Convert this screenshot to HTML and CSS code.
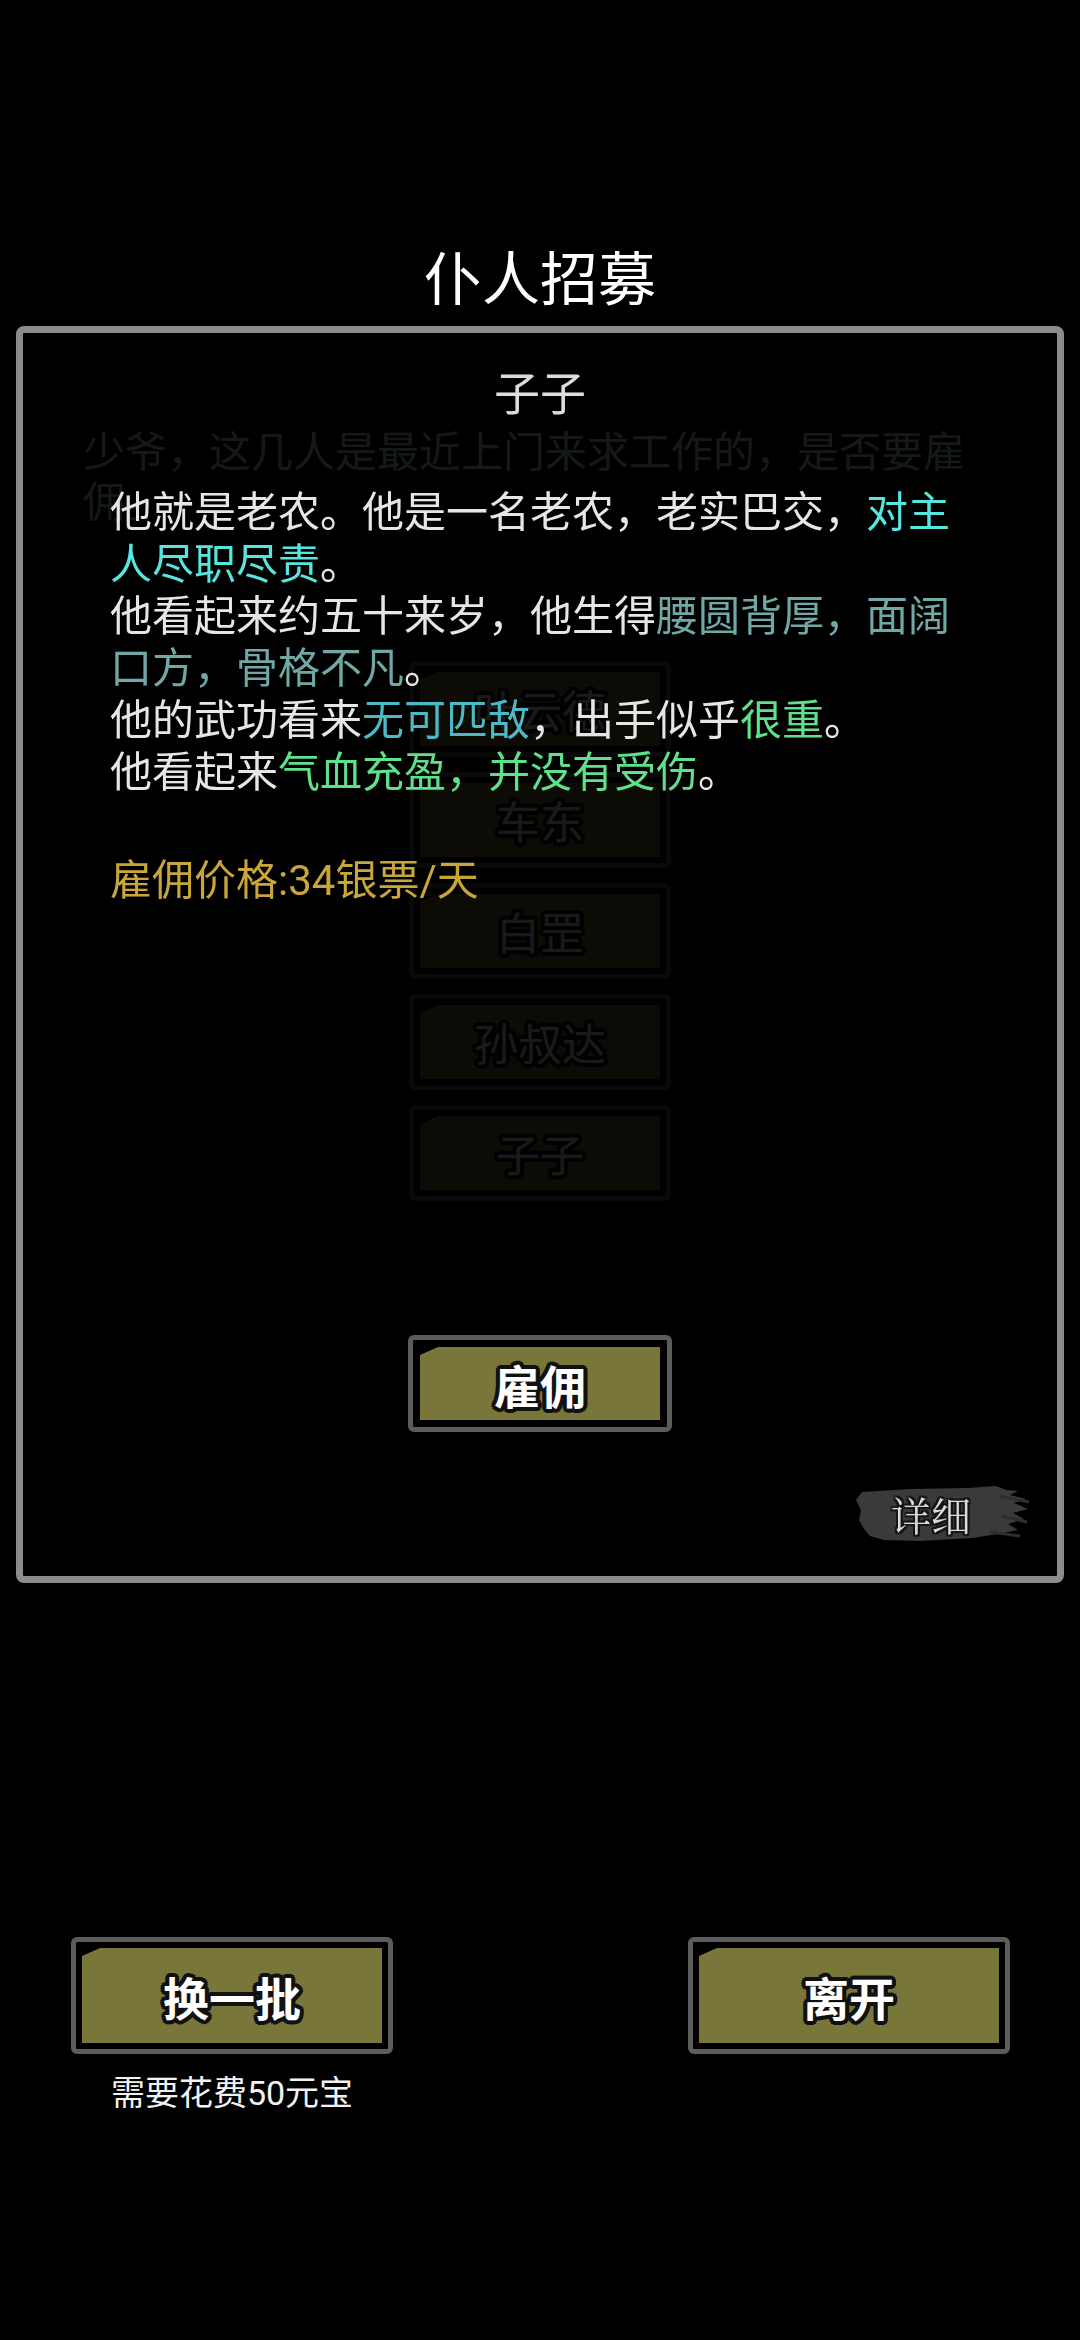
FILE: index.html
```html
<!DOCTYPE html>
<html lang="zh-CN">
<head>
<meta charset="utf-8">
<title>仆人招募</title>
<link rel="stylesheet" href="styles.css">
</head>
<body>
<div class="page">
  <h1 class="title">仆人招募</h1>

  <section class="panel">
    <div class="base-layer">
      <p class="intro">少爷，这几人是最近上门来求工作的，是否要雇佣。</p>
      <div class="roster">
        <div class="btn btn-roster"><div class="btn-fill"><span class="btn-label">叶云德</span></div></div>
        <div class="btn btn-roster"><div class="btn-fill"><span class="btn-label">车东</span></div></div>
        <div class="btn btn-roster"><div class="btn-fill"><span class="btn-label">白罡</span></div></div>
        <div class="btn btn-roster"><div class="btn-fill"><span class="btn-label">孙叔达</span></div></div>
        <div class="btn btn-roster"><div class="btn-fill"><span class="btn-label">子子</span></div></div>
      </div>
    </div>

    <div class="detail">
      <div class="detail-name">子子</div>
      <div class="desc">
        <p>他就是老农。他是一名老农，老实巴交，<span class="c-cyan">对主人尽职尽责</span>。</p>
        <p>他看起来约五十来岁，他生得<span class="c-teal">腰圆背厚，面阔口方，骨格不凡</span>。</p>
        <p>他的武功看来<span class="c-blue">无可匹敌</span>，出手似乎<span class="c-green">很重</span>。</p>
        <p>他看起来<span class="c-green">气血充盈，并没有受伤</span>。</p>
      </div>
      <div class="price">雇佣价格:34银票/天</div>
      <div class="btn btn-hire"><div class="btn-fill"><span class="btn-label">雇佣</span></div></div>
      <div class="more">
        <svg class="brush" viewBox="0 0 180 64" aria-hidden="true">
          <path d="M12 10 L60 7 L118 6 L146 4 L156 8 L168 9 L160 13 L176 17 L164 21 L178 27 L163 31 L174 37 L158 42 L168 48 L148 52 L122 56 L70 59 L34 58 L20 54 L14 47 L9 38 L11 28 L6 18 Z" fill="#3a3a3a"/>
          <path d="M150 14 L179 20 M152 34 L177 40 M140 50 L170 54" stroke="#2e2e2e" stroke-width="3" fill="none"/>
        </svg>
        <span class="more-label">详细</span>
      </div>
    </div>
  </section>

  <div class="actions">
    <div class="action">
      <div class="btn btn-big"><div class="btn-fill"><span class="btn-label">换一批</span></div></div>
      <div class="cost">需要花费50元宝</div>
    </div>
    <div class="action">
      <div class="btn btn-big"><div class="btn-fill"><span class="btn-label">离开</span></div></div>
    </div>
  </div>
</div>
</body>
</html>
```

FILE: styles.css
```css
* { box-sizing: border-box; }

html, body {
  margin: 0;
  padding: 0;
  background: #000;
}

body {
  font-family: "Roboto", "Noto Sans CJK SC", "Noto Sans", sans-serif;
  color: #e6e6e6;
  width: 1080px;
  height: 2340px;
  overflow: hidden;
}

.page {
  display: flex;
  flex-direction: column;
}

.title {
  margin: 245px 0 11px;
  height: 70px;
  line-height: 70px;
  font-size: 58px;
  font-weight: 400;
  text-align: center;
  color: #ffffff;
}

.panel {
  position: relative;
  margin: 0 16px;
  height: 1257px;
  border: 7px solid #8c8c8c;
  border-radius: 8px;
  background: #000;
}

/* dimmed list underneath */
.base-layer {
  opacity: 0.1;
  display: flex;
  flex-direction: column;
}

.intro {
  margin: 95px 0 0 60px;
  width: 900px;
  font-size: 42px;
  line-height: 50px;
  color: #d0f0f0;
}

.roster {
  margin-top: 133px;
  display: flex;
  flex-direction: column;
  align-items: center;
  gap: 15px;
}

/* generic button */
.btn {
  border: 5px solid #5c5c5c;
  border-radius: 6px;
  background: #000;
  display: flex;
}

.btn-fill {
  flex: 1;
  display: flex;
  align-items: center;
  justify-content: center;
  background: #79763a;
  clip-path: polygon(18px 0, 100% 0, 100% 100%, 0 100%, 0 8px);
}

.btn-label {
  font-weight: 700;
  color: #ffffff;
  text-shadow:
    3px 0 0 #111, -3px 0 0 #111, 0 3px 0 #111, 0 -3px 0 #111,
    2px 2px 0 #111, -2px 2px 0 #111, 2px -2px 0 #111, -2px -2px 0 #111,
    4px 1px 0 #111, -4px 1px 0 #111, 1px 4px 0 #111, 1px -4px 0 #111,
    -4px -1px 0 #111, 4px -1px 0 #111, -1px 4px 0 #111, -1px -4px 0 #111,
    3px 3px 0 #111, -3px 3px 0 #111, 3px -3px 0 #111, -3px -3px 0 #111;
}

.btn-roster {
  width: 262px;
  height: 96px;
  padding: 6px;
}

.btn-roster .btn-label {
  font-size: 44px;
  font-weight: 400;
}

.btn-hire {
  width: 264px;
  height: 97px;
  padding: 7px;
  align-self: center;
  margin-top: 428px;
}

.btn-hire .btn-label {
  font-size: 46px;
}

.btn-big {
  width: 322px;
  height: 117px;
  padding: 6px;
}

.btn-big .btn-label {
  font-size: 46px;
}

/* detail overlay */
.detail {
  position: absolute;
  inset: 0;
  display: flex;
  flex-direction: column;
}

.detail-name {
  margin-top: 31px;
  height: 60px;
  line-height: 60px;
  font-size: 46px;
  text-align: center;
  color: #dcdcdc;
}

.desc {
  margin: 63px 0 0 87px;
  width: 860px;
  font-size: 42px;
  line-height: 52px;
  color: #e6e6e6;
}

.desc p {
  margin: 0;
}

.c-cyan { color: #56e6df; }
.c-teal { color: #6fa8a5; }
.c-blue { color: #4cbac6; }
.c-green { color: #5fe08b; }

.price {
  margin: 56px 0 0 87px;
  font-size: 42px;
  line-height: 52px;
  color: #c9a63a;
}

.more {
  position: relative;
  align-self: flex-end;
  margin: 50px 27px 0 0;
  width: 180px;
  height: 64px;
  display: flex;
  align-items: center;
  justify-content: center;
}

.brush {
  position: absolute;
  inset: 0;
  width: 180px;
  height: 64px;
}

.more-label {
  position: relative;
  margin-right: 18px;
  font-family: "Noto Serif CJK SC", "Noto Sans CJK SC", serif;
  font-size: 40px;
  line-height: 64px;
  color: #d9d9d9;
  text-shadow: 2px 0 0 #151515, -2px 0 0 #151515, 0 2px 0 #151515, 0 -2px 0 #151515,
    2px 2px 0 #151515, -2px -2px 0 #151515, 2px -2px 0 #151515, -2px 2px 0 #151515;
}

/* bottom actions */
.actions {
  margin-top: 354px;
  padding: 0 70px 0 71px;
  display: flex;
  justify-content: space-between;
  align-items: flex-start;
}

.action {
  display: flex;
  flex-direction: column;
  align-items: center;
}

.cost {
  margin-top: 19px;
  font-size: 34px;
  line-height: 40px;
  color: #f2f2f2;
}
```
